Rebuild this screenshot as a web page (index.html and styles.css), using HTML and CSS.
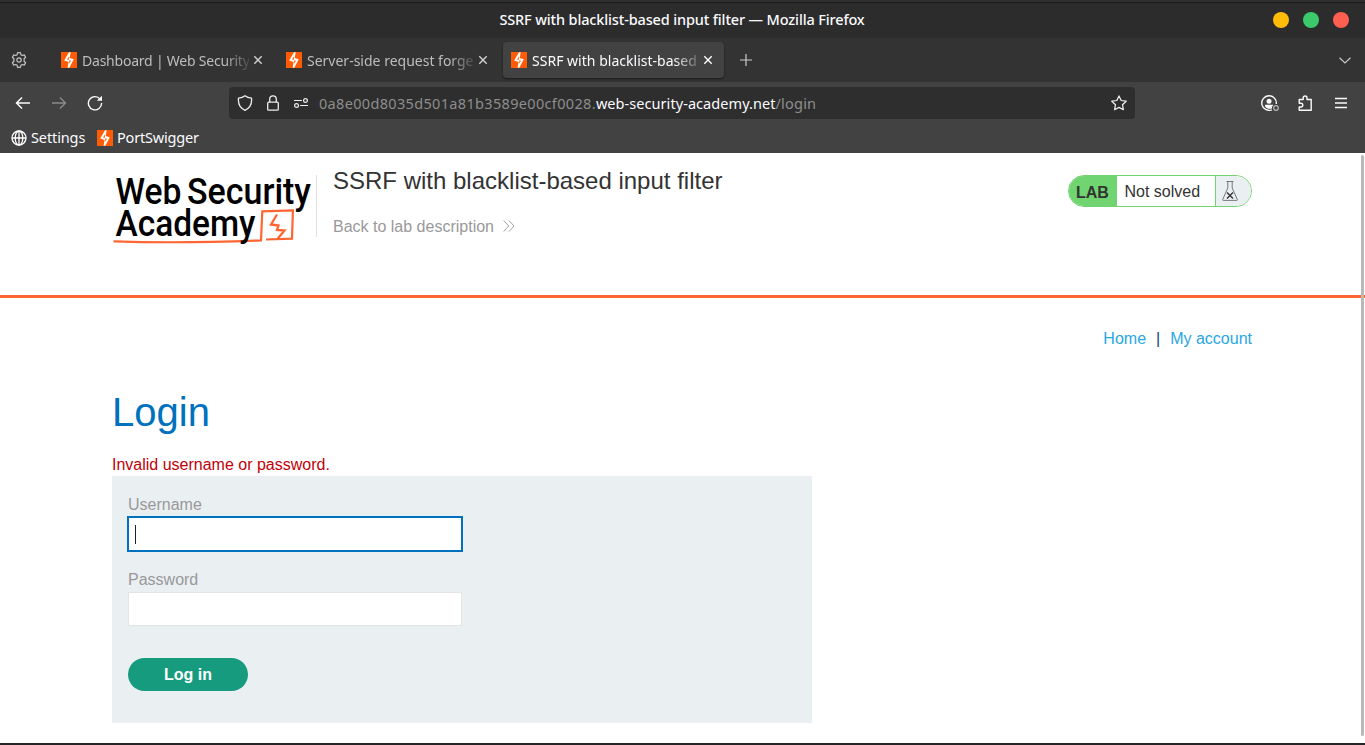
FILE: index.html
```html
<!DOCTYPE html>
<html lang="en">
<head>
<meta charset="utf-8">
<title>SSRF with blacklist-based input filter</title>
<link rel="stylesheet" href="styles.css">
</head>
<body>
<svg class="defs" aria-hidden="true">
  <symbol id="bolt" viewBox="0 0 16 16">
    <rect width="16" height="16" fill="#ff5c05"/>
    <path d="M8 .2h1.700L8.700 5.900l4.100 1.400-4.500 8.500H6.600l1-5.900-4.400-1.300z" fill="#fff"/>
    <path d="M8.100 4.300L6 7.400l1.700.6zM8.300 8.200l1.700.500-1.900 3z" fill="#ff5c05"/>
  </symbol>
  <symbol id="close" viewBox="0 0 10 10"><path d="M1.300 1.300l7.400 7.400M8.700 1.300l-7.400 7.400" fill="none" stroke="currentColor" stroke-width="1.400"/></symbol>
</svg>
<div class="window">
  <div class="desktop-strip"></div>
  <div class="titlebar">
    <span class="window-title">SSRF with blacklist-based input filter — Mozilla Firefox</span>
    <div class="window-buttons"><i class="min"></i><i class="max"></i><i class="quit"></i></div>
  </div>
  <div class="tabs">
    <svg class="gear" viewBox="0 0 16 16" fill="none" stroke="#c4c4c4" stroke-width="1.200" stroke-linejoin="round"><path d="M6.600.7h2.800l.5 2 1.300.75 2-.6 1.400 2.400-1.500 1.450v2.600l1.500 1.450-1.400 2.400-2-.6-1.300.75-.5 2H6.600l-.5-2-1.300-.75-2 .6-1.400-2.400 1.500-1.450V6.700L1.400 5.250l1.400-2.400 2 .6 1.300-.75z"/><circle cx="8" cy="8" r="2.200"/></svg>
    <div class="tab"><svg class="fav"><use href="#bolt"/></svg><span class="tab-label t1">Dashboard | Web Security</span><svg class="x"><use href="#close"/></svg></div>
    <div class="tab"><svg class="fav"><use href="#bolt"/></svg><span class="tab-label t2">Server-side request forge</span><svg class="x"><use href="#close"/></svg></div>
    <div class="tab active"><svg class="fav"><use href="#bolt"/></svg><span class="tab-label t3">SSRF with blacklist-based</span><svg class="x"><use href="#close"/></svg></div>
    <svg class="plus" viewBox="0 0 12 12"><path d="M6 0v12M0 6h12" stroke="#ccc" stroke-width="1.200"/></svg>
    <svg class="chevron" viewBox="0 0 12 7"><path d="M.5.700L6 6 11.500.700" fill="none" stroke="#c8c8c8" stroke-width="1.200"/></svg>
  </div>
  <div class="toolbar">
    <svg class="nav back" viewBox="0 0 16 16"><path d="M7 2.500L1.500 8 7 13.500M2 8h13" fill="none" stroke="#fbfbfe" stroke-width="1.500"/></svg>
    <svg class="nav forward" viewBox="0 0 16 16"><path d="M9 2.500L14.500 8 9 13.500M14 8H1" fill="none" stroke="#8c8c8c" stroke-width="1.300"/></svg>
    <svg class="nav" viewBox="0 0 16 16"><path d="M13.300 4.300A6.600 6.600 0 1 0 14.600 8" fill="none" stroke="#fbfbfe" stroke-width="1.400"/><path d="M15 .8v5H9.800z" fill="#fbfbfe"/></svg>
    <div class="urlbar">
      <svg class="shield" viewBox="0 0 16 16"><path d="M8 .8c2 1.700 4.200 2.200 6.500 2.300.5 4.600-.9 9.700-6.500 12.200C2.400 12.800 1 7.700 1.500 3.100 3.800 3 6 2.500 8 .8z" fill="none" stroke="#eee" stroke-width="1.300" stroke-linejoin="round"/></svg>
      <svg class="lock" viewBox="0 0 16 16" fill="none" stroke="#eee" stroke-width="1.300"><rect x="2.700" y="7.200" width="10.600" height="8" rx="1"/><path d="M4.700 7V4.200a3.300 3.300 0 0 1 6.600 0V7"/></svg>
      <svg class="perm" viewBox="0 0 16 16" fill="none" stroke="#eee" stroke-width="1.200"><path d="M1 5.500h8M7 10.500h8"/><circle cx="12.500" cy="5.500" r="1.900"/><circle cx="3.500" cy="10.500" r="1.900"/></svg>
      <span class="url"><span class="u1">0a8e00d8035d501a81b3589e00cf0028.</span><b>web-security-academy.net</b><span class="u3">/login</span></span>
      <svg class="star" viewBox="0 0 16 16"><path d="M8 .9l2.200 4.600 5 .7-3.700 3.500.9 5L8 12.400l-4.400 2.300.9-5L.8 6.200l5-.7z" fill="none" stroke="#eee" stroke-width="1.250" stroke-linejoin="round"/></svg>
    </div>
    <svg class="account" viewBox="0 0 18 16"><path d="M15.300 9A7.300 7.300 0 1 0 10.800 14.800" fill="none" stroke="#fbfbfe" stroke-width="1.400"/><circle cx="8" cy="6.200" r="2.500" fill="#fbfbfe"/><path d="M4 9.800h8v1c-1 .6-1.200 1.300-1 2.600-2.400 1-5.500.4-7-2.100z" fill="#fbfbfe"/><circle cx="15" cy="13" r="2.300" fill="none" stroke="#b5b5b5" stroke-width="1.200"/></svg>
    <svg class="puzzle" viewBox="0 0 16 16"><path d="M2.200 4.500h4V2.900a1.900 1.900 0 0 1 3.800 0v1.600h4.200v10.700h-12V12h1.700a1.900 1.900 0 0 0 0-3.800H2.200z" fill="none" stroke="#fbfbfe" stroke-width="1.400" stroke-linejoin="round"/></svg>
    <svg class="menu" viewBox="0 0 12 12"><path d="M0 1.500h12M0 6h12M0 10.500h12" stroke="#fbfbfe" stroke-width="1.300"/></svg>
  </div>
  <div class="bookmarks">
    <svg class="globe" viewBox="0 0 16 16" fill="none" stroke="#fff" stroke-width="1.300"><circle cx="8" cy="8" r="7"/><ellipse cx="8" cy="8" rx="3.800" ry="7"/><path d="M1 8h14M8 1v14"/></svg>
    <span class="bm1">Settings</span>
    <svg class="fav"><use href="#bolt"/></svg>
    <span class="bm2">PortSwigger</span>
  </div>

  <main class="page">
    <header class="lab-header">
      <svg class="logo" viewBox="0 0 204 76">
        <g class="logo-text">
          <text x="3.500" y="38.500" textLength="66" lengthAdjust="spacingAndGlyphs">Web</text>
          <text x="75" y="38.500" textLength="124" lengthAdjust="spacingAndGlyphs">Security</text>
        </g>
        <path d="M1.500 76.400Q70 78.500 149 75.400L150.300 46.300 180.900 45.500 180 73.600 154 74.500" fill="none" stroke="#ff6633" stroke-width="2.200"/>
        <text class="logo-text" x="3.500" y="71" textLength="140" lengthAdjust="spacingAndGlyphs">Academy</text>
        <path d="M165 49.500L159 59.500 166.500 60.500 165 65 172.500 65.500 165.800 73.500" fill="none" stroke="#ff6633" stroke-width="2.300"/>
      </svg>
      <div class="title-block">
        <h2>SSRF with blacklist-based input filter</h2>
        <a class="back-link">Back to lab description <svg viewBox="0 0 12 12"><path d="M.7.500l5 5.500-5 5.500M6 .5l5 5.500-5 5.500" fill="none" stroke="#999" stroke-width=".9"/></svg></a>
      </div>
      <div class="status"><b>LAB</b><span>Not solved</span><i><svg viewBox="0 0 16 20" fill="none" stroke="#777" stroke-width="1"><path d="M4.500.500h7M5.800.700V7L.7 18.500q-.3.900.6.900h13.400q.9 0 .6-.9L10.200 7V.700"/><path d="M5 11.500l6 6M11 11.500l-6 6" stroke="#333" stroke-width="1.400"/></svg></i></div>
    </header>
    <section class="content">
      <nav><a>Home</a><span>|</span><a>My account</a></nav>
      <h1>Login</h1>
      <p class="error">Invalid username or password.</p>
      <form class="login">
        <label>Username</label>
        <div class="field focused"><i class="caret"></i></div>
        <label class="second">Password</label>
        <div class="field"></div>
        <button type="button">Log in</button>
      </form>
    </section>
    <div class="scrollbar"></div>
  </main>
  <div class="bottom-edge"></div>
</div>
</body>
</html>
```
FILE: styles.css
```css
* { box-sizing: border-box; }
body { margin: 0; overflow: hidden; background: #fff; }
svg { display: block; flex: none; }
.defs { position: absolute; width: 0; height: 0; }
.window { width: 1365px; height: 745px; display: flex; flex-direction: column; font: 14.500px/20px "Noto Sans", sans-serif; color: #fbfbfe; }
.window > * { flex: none; }
.desktop-strip { height: 3px; background: #303030; border-bottom: 1px solid #1b1b1b; }
.titlebar { height: 35px; background: #2c2c2c; display: grid; grid-template-columns: 1fr auto 1fr; align-items: center; }
.window-title { grid-column: 2; font-weight: 500; white-space: nowrap; margin-top: -3px; letter-spacing: -.14px; margin-left: -1px; }
.window-buttons { display: flex; gap: 14px; justify-content: flex-end; padding-right: 16px; margin-top: -1px; }
.window-buttons i { width: 16px; height: 16px; border-radius: 50%; }
.min { background: #ffbd0a; }
.max { background: #3aca6b; }
.quit { background: #ff5f51; }

.tabs { height: 44px; background: #333; display: flex; align-items: center; }
.gear { width: 16px; height: 16px; margin: 0 30px 0 11px; }
.tab { width: 221px; height: 36px; margin-right: 4px; padding: 0 11px 0 8px; display: flex; align-items: center; border-radius: 4px; color: #bdbdbd; margin-left: -4px; }
.tab + .tab { margin-left: 0; }
.tab.active { background: #424242; color: #fbfbfe; box-shadow: 0 1px 2px #1a1a1a; }
.fav { width: 16px; height: 16px; }
.tab-label { width: 167px; margin: 2px 0 0 5px; white-space: nowrap; font-size: 14px; -webkit-mask-image: linear-gradient(90deg, #000 142px, transparent 172px); mask-image: linear-gradient(90deg, #000 142px, transparent 172px); }
.t1 { letter-spacing: -.22px; }
.t2 { letter-spacing: 0; }
.t3 { letter-spacing: .02px; }
.x { width: 10px; height: 10px; margin-left: 4px; color: #d0d0d0; }
.active .x { color: #fff; }
.plus { width: 12px; height: 12px; margin-left: 12px; }
.chevron { width: 12px; height: 7px; margin: 0 14px 0 auto; }

.toolbar { height: 42px; background: #424242; display: flex; align-items: center; }
.nav { width: 16px; height: 16px; margin-right: 20px; }
.back { margin-left: 15px; }
.urlbar { width: 906px; height: 32px; margin-left: 106px; background: #2e2e2e; border-radius: 4px; display: flex; align-items: center; padding: 0 8px; }
.shield, .lock, .perm, .star { width: 16px; height: 16px; }
.lock, .perm { margin-left: 12px; }
.url { margin-left: 10px; color: #8d8d8d; white-space: nowrap; }
.url b { font-weight: 400; color: #fbfbfe; letter-spacing: .06px; }
.u1 { letter-spacing: .33px; }
.u3 { letter-spacing: .2px; }
.star { margin-left: auto; }
.account { width: 18px; height: 16px; margin-left: 126px; }
.puzzle { width: 16px; height: 16px; margin-left: 18px; }
.menu { width: 12px; height: 12px; margin-left: 22px; }

.bookmarks { height: 29px; background: #424242; display: flex; align-items: center; padding: 0 0 2px 11px; }
.globe { width: 16px; height: 16px; }
.bookmarks span { margin-top: -1px; }
.bookmarks .bm1 { width: 66px; margin-left: 4px; letter-spacing: -.12px; }
.bookmarks .bm2 { margin-left: 4px; letter-spacing: -.18px; }

.page { height: 590px; position: relative; background: #fff; font-family: "Liberation Sans", Arial, sans-serif; font-size: 16px; color: #333; }
.lab-header { height: 145px; padding: 0 113px 0 112px; border-bottom: 3px solid #ff6633; display: flex; align-items: flex-start; }
.logo { width: 204px; height: 76px; margin-top: 12px; overflow: visible; }
.logo-text { font: 500 37px Roboto, sans-serif; fill: #000; }
.title-block { margin-top: 22px; height: 62px; padding-left: 16px; border-left: 1px solid #e0e0e0; }
h2 { margin: -8px 0 0; font-size: 24px; line-height: 28px; font-weight: 400; }
.back-link { display: flex; align-items: center; gap: 9px; margin-top: 23px; line-height: 18px; color: #999; }
.back-link svg { width: 12px; height: 12px; margin-top: -2px; }
.status { display: flex; width: 184px; height: 32px; margin: 22px 0 0 auto; border: 1px solid #70d470; border-radius: 16px; overflow: hidden; line-height: 31px; }
.status b { width: 48px; background: #70d470; padding-left: 7px; line-height: 33px; }
.status span { width: 99px; padding-left: 7.500px; border-right: 1px solid #70d470; }
.status i { flex: 1; background: #eaeff1; padding: 5px 0 0 6px; }
.status svg { width: 16px; height: 20px; }

.content { padding: 32px 113px 0 112px; }
nav { display: flex; justify-content: flex-end; line-height: 18px; color: #094776; }
nav a { color: #29a7e3; }
nav span { margin: 0 10px; }
h1 { margin: 40px 0 0; font-size: 40px; line-height: 48px; font-weight: 400; color: #0071bc; }
.error { margin: 20px 0 0; line-height: 18px; color: #c00008; }
.login { width: 700px; height: 247px; margin-top: 2px; padding: 20px 16px; background: #eaeff2; }
.login label { display: block; line-height: 18px; margin-bottom: 3px; color: #999; }
.login .second { margin-top: 20px; }
.field { width: 334px; height: 34px; background: #fff; border: 1px solid #e4e4e4; }
.field.focused { border-color: #0071bc; box-shadow: 0 0 0 1px #0071bc; padding: 7px 0 0 6px; }
.caret { display: block; width: 1px; height: 19px; background: #222; }
button { display: block; width: 120px; height: 33px; margin-top: 32px; padding: 0; border: 0; border-radius: 17px; background: #169b7f; color: #fff; font: bold 16px "Liberation Sans", Arial, sans-serif; }
.scrollbar { position: absolute; right: 1px; top: 2px; width: 3px; height: 581px; border-radius: 2px; background: #b9b9b9; }
.bottom-edge { height: 2px; background: #272427; }
```
